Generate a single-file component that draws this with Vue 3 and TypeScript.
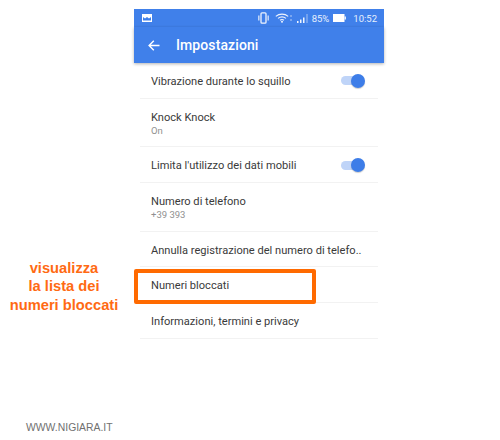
<script setup lang="ts">
interface Row { title: string; sub?: string; toggle?: boolean; marked?: boolean }
const rows: Row[] = [
  { title: 'Vibrazione durante lo squillo', toggle: true },
  { title: 'Knock Knock', sub: 'On' },
  { title: "Limita l'utilizzo dei dati mobili", toggle: true },
  { title: 'Numero di telefono', sub: '+39 393' },
  { title: 'Annulla registrazione del numero di telefo..' },
  { title: 'Numeri bloccati', marked: true },
  { title: 'Informazioni, termini e privacy' },
]
</script>

<template>
  <div class="page">
    <div class="main">
      <div class="note">visualizza<br />la lista dei<br />numeri bloccati</div>
      <div class="phone">
        <div class="status">
          <svg class="pic" width="10" height="8" viewBox="0 0 10 8"><path d="M0 0h10v8H0z" fill="#fff" /><path d="M1 3l2 1.500L5 3l2 1.500L9 3v3.500H1z" fill="#4080ea" /></svg>
          <span class="spacer"></span>
          <svg width="11" height="12" viewBox="0 0 11 12" class="ic"><rect x="3" y="0.800" width="5" height="10.400" rx="1" fill="none" stroke="#eef3fd" stroke-width="1.300" /><path d="M0.800 3.500v5M10.200 3.500v5" stroke="#c5d8f8" stroke-width="1.500" /></svg>
          <svg width="14" height="10" viewBox="0 0 14 10" class="ic wifi"><path d="M0.800 3.400C4.400 0.400 9.600 0.400 13.200 3.400M3 5.400C5.400 3.600 8.600 3.600 11 5.400M5 7.300C6 6.500 8 6.500 9 7.300" fill="none" stroke="#eef3fd" stroke-width="1.100" /><circle cx="7" cy="8.800" r="1" fill="#eef3fd" /></svg>
          <svg width="3" height="8" viewBox="0 0 3 8" class="ic dots"><path d="M1 1v2M1 5v2" stroke="#b5cdf6" stroke-width="1" /></svg>
          <svg width="12" height="9" viewBox="0 0 12 9" class="ic bars"><path d="M0 7h1.500v2H0zM3 5.500h1.500V9H3zM6 3.500h1.500V9H6z" fill="#eef4fe" /><path d="M9.500 0h1v9h-1z" fill="#a3c1f3" /></svg>
          <span class="pct">85%</span>
          <svg width="13" height="8" viewBox="0 0 13 8" class="ic batt"><path d="M0 0h11.500v8H0z" fill="#fff" /><path d="M11.500 2.500H13v3h-1.500z" fill="#e3ecfb" /></svg>
          <span class="clock">10:52</span>
        </div>
        <div class="bar">
          <svg width="12" height="11" viewBox="0 0 12 11" class="back"><path d="M11.500 5.500H1.200M5.800 0.800L1.100 5.500l4.700 4.700" fill="none" stroke="#fff" stroke-width="1.400" /></svg>
          <span class="heading">Impostazioni</span>
        </div>
        <ul class="list">
          <li v-for="row in rows" :key="row.title" class="row" :class="{ tall: row.sub }">
            <div class="texts">
              <div class="title">{{ row.title }}</div>
              <div v-if="row.sub" class="sub">{{ row.sub }}</div>
            </div>
            <span v-if="row.toggle" class="toggle"><span class="track"></span><span class="knob"></span></span>
            <span v-if="row.marked" class="mark"></span>
          </li>
        </ul>
      </div>
    </div>
    <div class="foot">WWW.NIGIARA.IT</div>
  </div>
</template>

<style scoped>
.page {
  width: 500px;
  height: 440px;
  background: #fff;
  display: flex;
  flex-direction: column;
  overflow: hidden;
  font-family: Roboto, "Liberation Sans", sans-serif;
}
.main {
  display: flex;
  padding-top: 9px;
  flex: 1;
}
.note {
  width: 134px;
  box-sizing: border-box;
  padding: 250px 6px 0 0;
  text-align: center;
  color: #ff6a13;
  font: bold 14.700px/18.400px "Liberation Sans", Arial, sans-serif;
}
.phone {
  width: 250px;
}
.status {
  height: 18px;
  background: #4080ea;
  display: flex;
  align-items: center;
  padding: 0 0 0 8px;
  color: #e8f0fd;
  font-size: 9.500px;
}
.spacer { flex: 1; }
.ic { flex: none; }
.wifi { margin-left: 6px; }
.dots { margin-left: 1px; }
.bars { margin-left: 4px; }
.pct { margin-left: 3px; }
.batt { margin-left: 4px; }
.clock { margin-left: 7px; margin-right: 7px; }
.bar {
  height: 36px;
  background: #4080ea;
  display: flex;
  align-items: center;
  padding-left: 14px;
  box-shadow: 0 1px 3px rgba(0, 0, 0, 0.3);
  position: relative;
}
.back { margin-right: 16px; }
.heading {
  color: #fff;
  font-size: 14px;
  font-weight: 500;
  letter-spacing: 0.1px;
}
.list {
  list-style: none;
  margin: 0;
  padding: 0 6px;
}
.row {
  position: relative;
  box-sizing: border-box;
  height: 35.700px;
  display: flex;
  align-items: center;
  padding: 3px 13px 0 11px;
  border-bottom: 1px solid #f2f2f2;
}
.row.tall { height: 48.700px; }
.texts { flex: 1; min-width: 0; }
.title {
  color: #3a3a3a;
  font-size: 11.100px;
  line-height: 14px;
  white-space: nowrap;
}
.sub {
  color: #909090;
  font-size: 9.500px;
  line-height: 12px;
}
.toggle {
  position: relative;
  width: 24px;
  height: 14px;
  flex: none;
  top: -1px;
}
.track {
  position: absolute;
  left: 0;
  right: 4px;
  top: 2.500px;
  height: 9px;
  border-radius: 4.500px;
  background: #bfd4f8;
}
.knob {
  position: absolute;
  right: 0;
  top: 0;
  width: 14px;
  height: 14px;
  border-radius: 50%;
  background: #3d7de8;
  box-shadow: 0 1px 1px rgba(0, 0, 0, 0.2);
}
.mark {
  position: absolute;
  left: -6px;
  top: 1.500px;
  width: 182px;
  height: 35px;
  box-sizing: border-box;
  border: 4px solid #ff6a00;
  border-radius: 2px;
}
.foot {
  padding: 0 0 5px 26px;
  color: #707070;
  font: 10.400px/14px "Liberation Sans", Arial, sans-serif;
}
</style>
